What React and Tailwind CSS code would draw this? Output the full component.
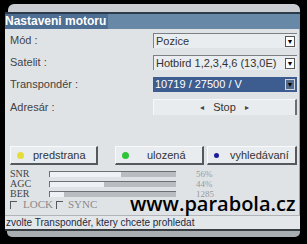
// Nastaveni motoru - OSD menu
const Drop = ({ dark }) => (
  <div
    className={
      dark
        ? 'w-[10px] h-[11px] mr-[2px] flex items-center justify-center bg-[#556a88] border border-[#d0d6de] text-black text-[7px] leading-none'
        : 'w-[10px] h-[11px] mr-[2px] flex items-center justify-center bg-white border border-[#555] text-black text-[7px] leading-none'
    }
  >
    ▼
  </div>
);

const Field = ({ text, selected }) => (
  <div
    className={
      selected
        ? 'h-[15px] flex items-center justify-between bg-[#3d5c90] text-white'
        : 'h-[15px] flex items-center justify-between bg-[#e9edf0] text-[#333] border-t border-l border-[#7c8084]'
    }
  >
    <span className="pl-[2px] text-[11px] leading-none whitespace-nowrap">{text}</span>
    <Drop dark={selected} />
  </div>
);

const ColorBtn = ({ dot, label, width, dotSize, textPad }) => (
  <div
    className={`${width} h-[19px] flex items-center bg-[#e9ecee] border-t border-l border-[#f8f9fa] border-r-2 border-b-2 border-r-[#55595d] border-b-[#55595d]`}
  >
    <span className={`${dot} ${dotSize} rounded-full ml-[6px]`} />
    <span className={`${textPad} text-[11px] leading-none text-[#333] whitespace-nowrap`}>{label}</span>
  </div>
);

const Bar = ({ fill }) => (
  <div className="w-[127px] h-[6px] bg-[#b9bdc1] border-l border-t border-[#6c7074] flex">
    <div className="h-full bg-[#eef2f6]" style={{ width: `${fill}px` }} />
  </div>
);

const signals = [
  { name: 'SNR', fill: 71, value: '56%' },
  { name: 'AGC', fill: 54, value: '44%' },
  { name: 'BER', fill: 14, value: '1285' }
];

export default function App() {
  return (
    <div className="w-[307px] h-[244px] bg-black relative overflow-hidden font-['Liberation_Sans',Arial,sans-serif]">
      <div className="ml-[8px] mr-[7px] mt-[4px] h-[8px] bg-[#c9cdd1] rounded-t-[6px]" />
      <div className="ml-[5px] mr-[7px] h-[2px] bg-[#2b3b4c]" />
      <div className="ml-[5px] mr-[7px] h-[15px] bg-[#6888a8] flex">
        <div className="bg-[#4e6e94] text-white font-bold text-[12px] leading-[15px] pr-[2px]">Nastaveni motoru</div>
      </div>

      <div className="ml-[5px] mr-[7px] h-[186px] bg-[#dfe3e6] border-r border-[#9ca0a4] pt-[4px]">
        <div className="flex flex-col gap-[7px]">
          {[
            ['Mód :', <Field text="Pozice" />],
            ['Satelit :', <Field text="Hotbird 1,2,3,4,6 (13,0E)" />],
            ['Transpondér :', <Field text="10719 / 27500 / V" selected />]
          ].map(([label, field]) => (
            <div key={label} className="flex items-center">
              <div className="w-[148px] pl-[5px] text-[11px] leading-none text-[#444]">{label}</div>
              <div className="w-[144px]">{field}</div>
            </div>
          ))}
          <div className="flex items-center">
            <div className="w-[148px] pl-[5px] text-[11px] leading-none text-[#444]">Adresár :</div>
            <div className="w-[144px] h-[16px] flex items-center justify-center gap-[9px] bg-[#e9ecee] border-l border-t border-[#f6f7f8] border-r-2 border-r-[#6a6e72] text-[#333] text-[11px] leading-none">
              <span className="text-[8px] text-[#444]">◂</span>
              <span>Stop</span>
              <span className="text-[8px] text-[#444]">▸</span>
            </div>
          </div>
        </div>

        <div className="flex mt-[31px] pl-[5px]">
          <ColorBtn dot="bg-[#e6dc3c]" dotSize="w-[7px] h-[7px]" label="predstrana" width="w-[88px]" textPad="pl-[9px]" />
          <div className="w-[17px]" />
          <ColorBtn dot="bg-[#2ec43a]" dotSize="w-[7px] h-[7px]" label="ulozená" width="w-[89px]" textPad="pl-[18px]" />
          <div className="w-[3px]" />
          <ColorBtn dot="bg-[#1c1c9c]" dotSize="w-[5px] h-[5px]" label="vyhledávaní" width="w-[90px]" textPad="pl-[11px]" />
        </div>

        <div className="mt-[4px] pl-[5px] font-['Liberation_Serif',serif]">
          {signals.map((s) => (
            <div key={s.name} className="h-[10px] flex items-center">
              <div className="w-[39px] text-[10px] leading-[10px] text-[#444]">{s.name}</div>
              <Bar fill={s.fill} />
              <div className="pl-[20px] text-[9px] leading-[10px] text-[#9a9a9a]">{s.value}</div>
            </div>
          ))}
          <div className="h-[11px] flex items-center text-[11px] leading-none text-[#8a8a8a]">
            <span className="w-[7px] h-[8px] border-l border-t border-[#55595d]" />
            <span className="pl-[6px]">LOCK</span>
            <span className="ml-[3px] w-[7px] h-[8px] border-l border-t border-[#55595d]" />
            <span className="pl-[5px]">SYNC</span>
          </div>
        </div>
      </div>

      <div className="ml-[5px] mr-[7px] h-[14px] bg-[#e3e7e9] border-t border-[#b0b4b8] flex items-center">
        <span className="pl-[1px] text-[10px] leading-none text-[#1e2a44] whitespace-nowrap">zvolte Transpondér, ktery chcete prohledat</span>
      </div>
      <div className="ml-[5px] mr-[7px] h-[2px] bg-[#3a3f44]" />
      <div className="ml-[7px] mr-[7px] h-[6px] bg-[#a9aeb3] rounded-b-[5px]" />

      <div className="absolute left-[130px] top-[194px] text-[20px] leading-none text-black font-semibold font-['Open_Sans',sans-serif] whitespace-nowrap">
        www.parabola.cz
      </div>
    </div>
  );
}
